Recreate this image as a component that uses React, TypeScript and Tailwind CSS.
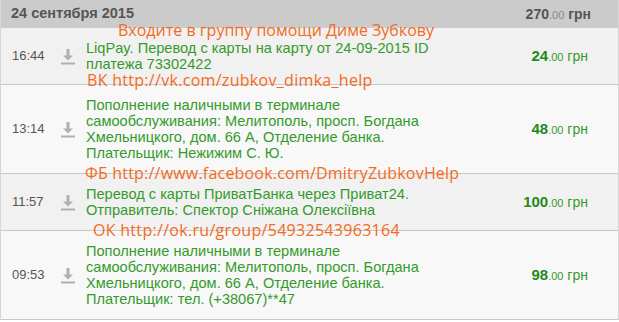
const rows = [
  {
    time: '16:44',
    text: ['LiqPay. Перевод с карты на карту от 24-09-2015 ID', 'платежа 73302422'],
    amount: '24',
    bg: 'bg-[#f1f1f1]',
  },
  {
    time: '13:14',
    text: [
      'Пополнение наличными в терминале',
      'самообслуживания: Мелитополь, просп. Богдана',
      'Хмельницкого, дом. 66 А, Отделение банка.',
      'Плательщик: Нежижим С. Ю.',
    ],
    amount: '48',
    bg: 'bg-[#f8f8f8]',
  },
  {
    time: '11:57',
    text: ['Перевод с карты ПриватБанка через Приват24.', 'Отправитель: Спектор Сніжана Олексіївна'],
    amount: '100',
    bg: 'bg-[#f1f1f1]',
  },
  {
    time: '09:53',
    text: [
      'Пополнение наличными в терминале',
      'самообслуживания: Мелитополь, просп. Богдана',
      'Хмельницкого, дом. 66 А, Отделение банка.',
      'Плательщик: тел. (+38067)**47',
    ],
    amount: '98',
    bg: 'bg-[#f8f8f8]',
  },
];

// orange watermark lines laid over the list
const overlays = [
  { text: 'Входите в группу помощи Диме Зубкову', cls: 'left-[118px] top-[20px]' },
  { text: 'ВК http://vk.com/zubkov_dimka_help', cls: 'left-[87px] top-[70px] tracking-[0.3px]' },
  { text: 'ФБ http://www.facebook.com/DmitryZubkovHelp', cls: 'left-[85px] top-[163px] tracking-[0.2px]' },
  { text: 'ОК http://ok.ru/group/54932543963164', cls: 'left-[93px] top-[220px] tracking-[0.3px]' },
];

function DownloadIcon() {
  return (
    <svg width="14" height="17" viewBox="0 0 14 17" className="text-[#b0b0b0]">
      <rect x="5.5" y="1" width="3" height="7" fill="currentColor" />
      <path d="M2 7.5 H12 L7 12.5 Z" fill="currentColor" />
      <rect x="0" y="14.5" width="14" height="2" fill="currentColor" />
    </svg>
  );
}

export default function App() {
  return (
    <div className="relative w-[619px] font-['Liberation_Sans',Arial,sans-serif] text-[13px]">
      <div className="border-x border-[#d6d6d6]">
        <div className="flex h-7 items-center justify-between bg-[#cbcbcb] pl-[10px] pr-[27px]">
          <span className="text-[14.5px] font-bold text-[#555]">24 сентября 2015</span>
          <span className="text-[#555]">
            <span className="text-[14px] font-bold">270</span>
            <span className="text-[11px] text-[#888]">.00</span>
            <span className="text-[14px] font-bold"> грн</span>
          </span>
        </div>
        {rows.map((row) => (
          <div key={row.time} className={`flex items-center border-b border-[#c8c8c8] py-3 ${row.bg}`}>
            <span className="w-[48px] shrink-0 pl-[11px] text-[#555]">{row.time}</span>
            <span className="flex w-[37px] shrink-0 justify-center">
              <DownloadIcon />
            </span>
            <div className="w-[365px] shrink-0 text-[14.6px] leading-4 text-[#359a2c]">
              {row.text.map((t) => (
                <div key={t}>{t}</div>
              ))}
            </div>
            <div className="flex-1 pr-[30px] text-right text-[#359a2c]">
              <span className="text-[15px] font-bold text-[#1f8a1a]">{row.amount}</span>
              <span className="text-[11px]">.00</span>
              <span className="text-[14px]"> грн</span>
            </div>
          </div>
        ))}
      </div>
      {overlays.map((o) => (
        <div
          key={o.text}
          className={`absolute whitespace-nowrap font-['Open_Sans',sans-serif] text-[16px] leading-5 text-[#f26b21] ${o.cls}`}
        >
          {o.text}
        </div>
      ))}
    </div>
  );
}
